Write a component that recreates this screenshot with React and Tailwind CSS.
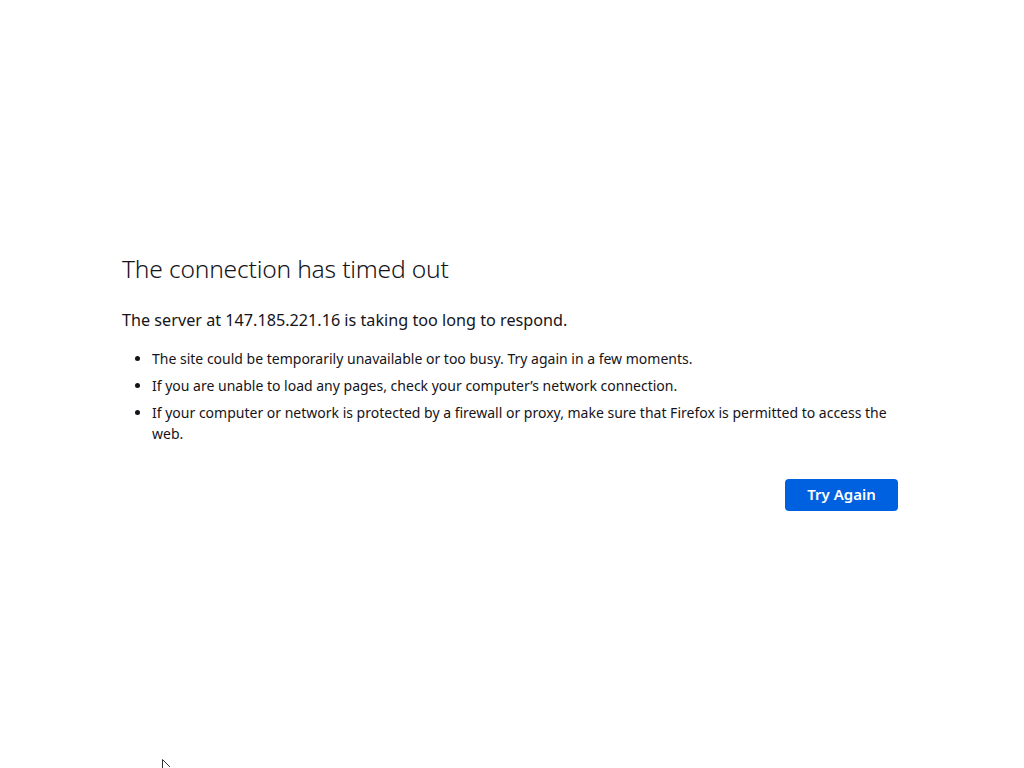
export default function App() {
  return (
    <div
      className="relative min-h-screen w-full bg-white text-[#15141a] flex items-center justify-center"
      style={{ fontFamily: '"Noto Sans", "Open Sans", sans-serif' }}
    >
      <div className="w-[780px] pr-1 pb-[6px]">
        {/* title */}
        <h1 className="text-[24.6px] font-light leading-[34px] tracking-[-0.2px] mb-[22px]">
          The connection has timed out
        </h1>

        <p className="text-[16.2px] leading-[24px] mb-[16px]">
          The server at 147.185.221.16 is taking too long to respond.
        </p>

        <ul className="list-disc pl-[30px] text-[14px] leading-[21px]">
          <li className="mb-[6px]">
            The site could be temporarily unavailable or too busy. Try again in a few moments.
          </li>
          <li className="mb-[6px]">
            If you are unable to load any pages, check your computer’s network connection.
          </li>
          <li>
            If your computer or network is protected by a firewall or proxy, make sure that Firefox is permitted to access the web.
          </li>
        </ul>

        <div className="flex justify-end mt-[35px]">
          <button className="w-[113px] h-[32px] rounded-[4px] bg-[#0061e0] text-white text-[15px] font-semibold">
            Try Again
          </button>
        </div>
      </div>

      {/* mouse cursor */}
      <svg className="absolute left-[162px] top-[759px]" width="12" height="10" viewBox="0 0 12 10">
        <path d="M0.5 0.5 L0.5 9.5 M0.5 0.5 L8 8" stroke="#333" strokeWidth="1" fill="none" />
      </svg>
    </div>
  );
}
